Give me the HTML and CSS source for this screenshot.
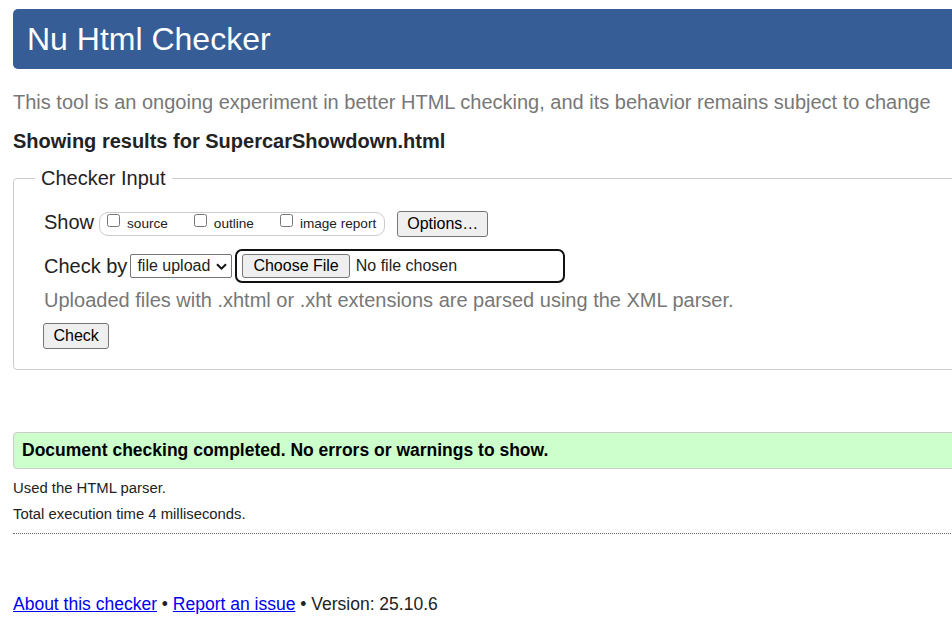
FILE: index.html
```html
<!DOCTYPE html>
<html lang="en">
<head>
  <meta charset="UTF-8">
  <meta name="viewport" content="width=device-width, initial-scale=1">

  <title>Showing results for SupercarShowdown.html - Nu Html Checker</title>

  <link rel="stylesheet" href="styles.css">
</head>

<body>
<div class="page">
  <h1 class="masthead">Nu Html Checker</h1>

  <p class="intro">This tool is an ongoing experiment in better HTML checking, and its behavior remains subject to change</p>

  <h2 class="results-for">Showing results for SupercarShowdown.html</h2>

  <form class="checker" action="#">
    <fieldset class="checker-input">
      <legend>Checker Input</legend>

      <div class="row show-row">
        <span class="row-label">Show</span>
        <span class="show-opts">
          <label><input type="checkbox"><span>source</span></label>
          <label><input type="checkbox"><span>outline</span></label>
          <label><input type="checkbox"><span>image report</span></label>
        </span>
        <button type="button" class="btn options-btn">Options…</button>
      </div>

      <div class="row check-row">
        <span class="row-label">Check by</span>
        <span class="select">
          <span>file upload</span>
          <svg width="11" height="7" viewBox="0 0 11 7"><path d="M1 1.2 L5.5 5.6 L10 1.2" fill="none" stroke="#111" stroke-width="2"/></svg>
        </span>
        <span class="file-picker">
          <button type="button" class="btn">Choose File</button>
          <span class="file-name">No file chosen</span>
        </span>
      </div>

      <p class="hint">Uploaded files with .xhtml or .xht extensions are parsed using the XML parser.</p>

      <button type="button" class="btn check-btn">Check</button>
    </fieldset>
  </form>

  <div class="success">
    <p>Document checking completed. No errors or warnings to show.</p>
  </div>

  <p class="stats">Used the HTML parser.</p>
  <p class="stats second">Total execution time 4 milliseconds.</p>

  <hr class="rule">

  <p class="footer"><a href="#">About this checker</a> • <a href="#">Report an issue</a> • Version: 25.10.6</p>
</div>
</body>
</html>
```

FILE: styles.css
```css
html, body {
  margin: 0;
  padding: 0;

  overflow: hidden; /* page is wider than the window, like the original */

  font-family: "Liberation Sans", Arial, sans-serif;
  color: #222;
  background: white;
}

.page {
  width: 1100px;
  padding: 0 13px;
}

p, h1, h2 {
  margin: 0;
}

.masthead {
  margin-top: 9px;
  height: 60px;
  padding-left: 14px;

  font-size: 32px;
  font-weight: normal;
  line-height: 60px;

  background-color: #365d95;
  color: white;
  border-radius: 5px;
}

.intro {
  margin-top: 22px;
  font-size: 20px;
  line-height: 23px;
  color: #777;
}

.results-for {
  margin-top: 16px;
  font-size: 20px;
  line-height: 23px;
  font-weight: bold;
}

/* Form */
.checker-input {
  margin: 14px 0 0;
  padding: 21px 0 20px 30px;
  min-width: 0;

  border: 1px solid #ccc;
  border-radius: 4px;
}

.checker-input legend {
  margin-left: -9px;
  padding: 0 6px;
  font-size: 20px;
  line-height: 23px;
}

.row {
  display: flex;
}

.row-label {
  font-size: 20px;
  line-height: 23px;
}

.show-row {
  height: 26px;
  align-items: flex-start;
}

.show-opts {
  display: flex;
  align-items: flex-start;
  column-gap: 26px;

  height: 24px;
  box-sizing: border-box;
  margin: 1px 0 0 5px;
  padding: 0 8px 0 7px;

  border: 1px solid #ccc;
  border-radius: 9px;
}

.show-opts label {
  display: flex;
  align-items: flex-start;
}

.show-opts input {
  width: 13px;
  height: 13px;
  margin: 1px 7px 0 0;
}

.show-opts span {
  margin-top: 3px;
  font-size: 13.6px;
  line-height: 16px;
}

.btn {
  font-family: inherit;
  font-size: 16px;
  color: black;

  background-color: #efefef;
  border: 1px solid #767676;
  border-radius: 3px;
}

.options-btn {
  margin-left: 12px;
  height: 26px;
  padding: 0 9px;
}

.check-row {
  margin-top: 12px;
  height: 34px;
  align-items: center;
}

.select {
  display: flex;
  align-items: center;

  width: 102px;
  height: 24px;
  box-sizing: border-box;
  margin-left: 3px;
  padding: 0 4px 0 6px;

  font-size: 16px;
  border: 1px solid #767676;
  border-radius: 2px;
}

.select svg {
  margin-left: auto;
}

.file-picker {
  display: flex;
  align-items: center;

  width: 330px;
  height: 34px;
  box-sizing: border-box;
  margin-left: 3px;
  padding-left: 5px;

  border: 2px solid #111;
  border-radius: 7px;
}

.file-picker .btn {
  height: 24px;
  padding: 0 10px;
}

.file-name {
  margin-left: 6px;
  font-size: 16px;
}

.hint {
  margin-top: 6px;
  font-size: 20px;
  line-height: 23px;
  color: #777;
}

.check-btn {
  display: block;
  margin: 11px 0 0 -1px;
  height: 26px;
  padding: 0 9.5px;
}

/* Results */
.success {
  margin-top: 62px;
  padding: 7px 8px;

  background-color: #ccffcc;
  border: 1px solid #ccc;
  border-radius: 4px;
}

.success p {
  font-size: 17.5px;
  line-height: 21px;
  font-weight: bold;
  color: black;
}

.stats {
  margin-top: 11px;
  font-size: 14.85px;
  line-height: 17px;
}

.stats.second {
  margin-top: 9px;
}

.rule {
  margin: 10px 0 0;
  border: 0;
  border-top: 1px dotted #666;
}

.footer {
  margin-top: 60px;
  font-size: 17.5px;
  line-height: 20px;
}

.footer a {
  color: #0000ee;
}
```
